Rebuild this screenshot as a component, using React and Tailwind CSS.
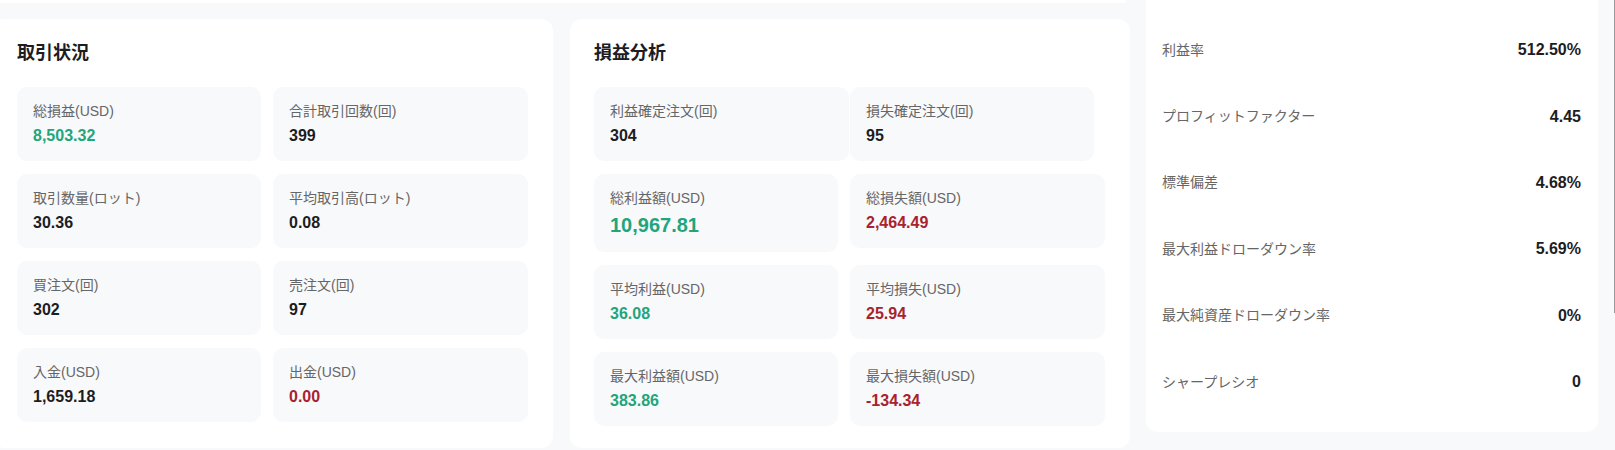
const GREEN = 'text-[#22a57b]'
const RED = 'text-[#a8222f]'
const DARK = 'text-[#1d1d1f]'

const tradeStats = [
  { label: '総損益(USD)', value: '8,503.32', color: GREEN },
  { label: '合計取引回数(回)', value: '399', color: DARK },
  { label: '取引数量(ロット)', value: '30.36', color: DARK },
  { label: '平均取引高(ロット)', value: '0.08', color: DARK },
  { label: '買注文(回)', value: '302', color: DARK },
  { label: '売注文(回)', value: '97', color: DARK },
  { label: '入金(USD)', value: '1,659.18', color: DARK },
  { label: '出金(USD)', value: '0.00', color: RED },
]

const pnlStats = [
  { label: '総利益額(USD)', value: '10,967.81', color: GREEN, big: true },
  { label: '総損失額(USD)', value: '2,464.49', color: RED },
  { label: '平均利益(USD)', value: '36.08', color: GREEN },
  { label: '平均損失(USD)', value: '25.94', color: RED },
  { label: '最大利益額(USD)', value: '383.86', color: GREEN },
  { label: '最大損失額(USD)', value: '-134.34', color: RED },
]

const ratios = [
  { label: '利益率', value: '512.50%' },
  { label: 'プロフィットファクター', value: '4.45' },
  { label: '標準偏差', value: '4.68%' },
  { label: '最大利益ドローダウン率', value: '5.69%' },
  { label: '最大純資産ドローダウン率', value: '0%' },
  { label: 'シャープレシオ', value: '0' },
]

function StatBox({ label, value, color, big, className = '' }) {
  return (
    <div className={`bg-[#f8f9fb] rounded-[10px] pl-4 pr-3 pt-[14px] pb-[13px] ${className}`}>
      <p className="text-[14px] leading-[21px] text-[#666666]">{label}</p>
      <p className={`mt-[2px] font-bold ${big ? 'text-[20px] leading-7' : 'text-[16px] leading-6'} ${color}`}>
        {value}
      </p>
    </div>
  )
}

function CardTitle({ children }) {
  return <h2 className="text-[18px] leading-7 font-bold text-[#1d1d1f] mb-5">{children}</h2>
}

export default function App() {
  return (
    <div
      className="relative h-[450px] w-full overflow-hidden bg-[#f8f9fb]"
      style={{ fontFamily: '"Liberation Sans", Arial, "Noto Sans CJK JP", sans-serif' }}
    >
      <div className="flex items-start">
        {/* left block: tail of the card above + two cards */}
        <div className="ml-[-7px] w-[1137px] shrink-0">
          <div className="h-[3px] w-[1133px] bg-white rounded-br-[4px]" />
          <div className="mt-4 flex gap-[17px] items-stretch">
            {/* 取引状況 */}
            <div className="w-[560px] h-[429px] bg-white rounded-xl px-6 pt-5 pb-[22px]">
              <CardTitle>取引状況</CardTitle>
              <div className="grid grid-cols-[244px_255px] gap-x-3 gap-y-[13px] items-start">
                {tradeStats.map((s) => (
                  <StatBox key={s.label} {...s} />
                ))}
              </div>
            </div>

            {/* 損益分析 */}
            <div className="w-[560px] h-[429px] bg-white rounded-xl px-6 pt-5 pb-[22px]">
              <CardTitle>損益分析</CardTitle>
              <div className="flex flex-col gap-y-[13px]">
                <div className="flex gap-px">
                  <StatBox className="w-[255px]" label="利益確定注文(回)" value="304" color={DARK} />
                  <StatBox className="w-[244px]" label="損失確定注文(回)" value="95" color={DARK} />
                </div>
                <div className="grid grid-cols-[244px_255px] gap-x-3 gap-y-[13px] items-start">
                  {pnlStats.map((s) => (
                    <StatBox key={s.label} {...s} />
                  ))}
                </div>
              </div>
            </div>
          </div>
        </div>

        {/* ratios */}
        <div className="ml-[16px] w-[452px] shrink-0 bg-white rounded-b-xl pl-4 pr-[17px] pt-[17px] pb-[17px]">
          {ratios.map((r) => (
            <div key={r.label} className="h-[66.4px] flex items-center justify-between">
              <span className="text-[14px] text-[#666666]">{r.label}</span>
              <span className="text-[16px] font-bold text-[#1d1d1f]">{r.value}</span>
            </div>
          ))}
        </div>
      </div>

      {/* page scrollbar edge */}
      <div className="absolute right-0 top-0 w-px h-[313px] bg-[#9a9a9a]" />
    </div>
  )
}
